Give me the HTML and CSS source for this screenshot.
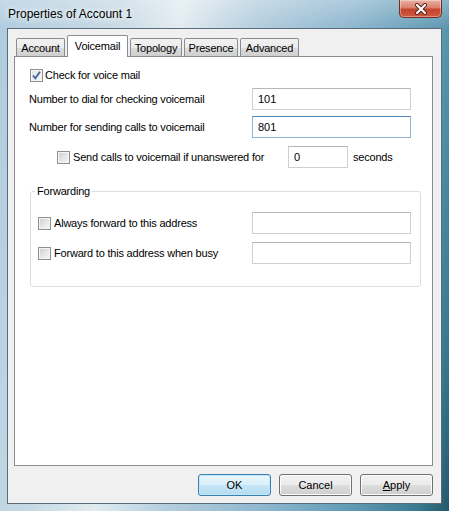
FILE: index.html
```html
<!DOCTYPE html>
<html lang="en">
<head>
<meta charset="UTF-8">
<title>Properties of Account 1</title>
<link rel="stylesheet" href="styles.css">
</head>
<body>

<div class="window">
  <div class="titlebar">
    <span class="title">Properties of Account 1</span>
    <div class="close">
      <svg width="16" height="12" viewBox="0 0 16 12">
        <path d="M4 2 L12 10 M12 2 L4 10" stroke="#5a2118" stroke-width="4" stroke-linecap="round"/>
        <path d="M4 2 L12 10 M12 2 L4 10" stroke="#fff" stroke-width="2.2" stroke-linecap="round"/>
      </svg>
    </div>
  </div>

  <div class="client">
    <div class="tabs">
      <div class="tab tab-account">Account</div>
      <div class="tab tab-active tab-voicemail">Voicemail</div>
      <div class="tab tab-topology">Topology</div>
      <div class="tab tab-presence">Presence</div>
      <div class="tab tab-advanced">Advanced</div>
    </div>

    <div class="panel">
      <div class="row row-check">
        <label class="check">
          <span class="box checked">
            <svg width="11" height="11" viewBox="0 0 11 11"><path d="M2 5.5 L4.3 8.3 L9 1.8" fill="none" stroke="#4b5f94" stroke-width="1.8"/></svg>
          </span>
          Check for voice mail
        </label>
      </div>
      <div class="row row-dial">
        <span class="label">Number to dial for checking voicemail</span>
        <input class="field field-wide" type="text" value="101">
      </div>
      <div class="row row-send">
        <span class="label">Number for sending calls to voicemail</span>
        <input class="field field-wide focused" type="text" value="801">
      </div>
      <div class="row row-timeout">
        <label class="check check-timeout"><span class="box"></span>Send calls to voicemail if unanswered for</label>
        <input class="field field-short" type="text" value="0">
        <span class="unit">seconds</span>
      </div>

      <fieldset class="group">
        <legend>Forwarding</legend>
        <div class="row row-always">
          <label class="check"><span class="box"></span>Always forward to this address</label>
          <input class="field field-wide" type="text" value="">
        </div>
        <div class="row row-busy">
          <label class="check"><span class="box"></span>Forward to this address when busy</label>
          <input class="field field-wide" type="text" value="">
        </div>
      </fieldset>
    </div>

    <div class="buttons">
      <button class="btn btn-default">OK</button>
      <button class="btn">Cancel</button>
      <button class="btn"><u>A</u>pply</button>
    </div>
  </div>
</div>

</body>
</html>
```

FILE: styles.css
```css
body {
  margin: 0;
  font-family: "Liberation Sans", Arial, sans-serif;
  font-size: 11px;
  letter-spacing: -0.2px;
  color: #000;
}

.window {
  width: 449px;
  height: 511px;
  box-sizing: border-box;
  padding: 0 7px 7px 7px;
  display: flex;
  flex-direction: column;
  background:
    linear-gradient(180deg, rgba(255,255,255,0.28), rgba(255,255,255,0) 30px),
    linear-gradient(100deg, #aecbdf 0%, #c6d9e4 22%, #e1ebf0 34%, #b3cddd 48%, #8db6cf 66%, #5f9ab3 82%, #3a7a90 94%, #24596b 100%);
}

.titlebar {
  height: 28px;
  flex-shrink: 0;
  display: flex;
  justify-content: space-between;
  align-items: flex-start;
}

.title {
  font-size: 12px;
  letter-spacing: 0;
  line-height: 28px;
  padding-left: 1px;
  text-shadow: 0 0 6px #fff, 0 0 10px rgba(255,255,255,0.8);
}

.close {
  width: 43px;
  height: 18px;
  box-sizing: border-box;
  border: 1px solid #7a2c22;
  border-top: none;
  border-radius: 0 0 5px 5px;
  background: linear-gradient(180deg, #eab2a4 0%, #d9806d 45%, #c2442f 55%, #cf5a3e 100%);
  box-shadow: inset 0 0 0 1px rgba(255,255,255,0.35);
  display: flex;
  align-items: center;
  justify-content: center;
}

.client {
  flex: 1;
  background: #f0f0f0;
  border: 1px solid #5d6b77;
  padding: 6px 0 0 6px;
  display: flex;
  flex-direction: column;
}

.tabs {
  display: flex;
  align-items: flex-end;
  height: 21px;
  padding-left: 2px;
}

.tab {
  height: 18px;
  box-sizing: border-box;
  border: 1px solid #898c95;
  border-bottom: none;
  border-radius: 2px 2px 0 0;
  background: linear-gradient(180deg, #f2f2f2 0%, #ebebeb 50%, #dddddd 51%, #cfcfcf 100%);
  display: flex;
  align-items: center;
  justify-content: center;
  margin-right: 2px;
}

.tab-account { width: 49px; margin-right: 2px; }
.tab-voicemail { width: 61px; }
.tab-topology { width: 52px; }
.tab-presence { width: 54px; margin-right: 2px; }
.tab-advanced { width: 59px; }

.tab-active {
  height: 22px;
  margin-bottom: -1px;
  background: #fff;
  position: relative;
  z-index: 1;
  padding-bottom: 2px;
}

.panel {
  width: 419px;
  height: 410px;
  box-sizing: border-box;
  border: 1px solid #898c95;
  background: #fff;
  padding: 7px 11px 0 14px;
  display: flex;
  flex-direction: column;
}

.row {
  height: 22px;
  display: flex;
  align-items: center;
  padding-right: 10px;
}

.row-dial { margin-top: 2px; }
.row-send { margin-top: 6px; }
.row-timeout { margin-top: 8px; padding-left: 28px; }

.row-check .check { margin-left: 1px; }

.check {
  display: flex;
  align-items: center;
  gap: 2px;
}

.check-timeout { width: 231px; gap: 3px; }

.box {
  width: 13px;
  height: 13px;
  box-sizing: border-box;
  border: 1px solid #8e8f8f;
  background: linear-gradient(135deg, #c9ccd1 0%, #e4e5e7 50%, #f7f7f7 100%);
  box-shadow: inset 0 0 0 1px #f4f4f4;
  display: flex;
  align-items: center;
  justify-content: center;
}

.box.checked {
  background: linear-gradient(135deg, #dfe4ea 0%, #f5f6f8 100%);
}

.field {
  height: 22px;
  box-sizing: border-box;
  border: 1px solid #cdd0d4;
  border-top-color: #b4b7bc;
  padding: 0 5px;
  font-family: "Liberation Sans", Arial, sans-serif;
  font-size: 11px;
  color: #000;
  background: #fff;
  outline: none;
}

.field-wide { width: 159px; margin-left: auto; }
.field-short { width: 60px; }

.field.focused {
  border-color: #8fb4d4;
  border-top-color: #4f87b6;
}

.unit { margin-left: 5px; }

.group {
  margin: 16px 0 0 1px;
  padding: 0 9px 22px 0;
  border: 1px solid #d5dfe5;
  border-radius: 3px;
  min-width: 0;
}

.group legend {
  margin-left: 4px;
  padding: 0 2px;
  line-height: 14px;
}

.group .row { padding: 0 0 0 7px; }
.group .check { gap: 3px; }
.row-always { margin-top: 14px; }
.row-busy { margin-top: 8px; }

.buttons {
  display: flex;
  justify-content: flex-end;
  gap: 8px;
  width: 419px;
  margin-top: 8px;
}

.btn {
  width: 73px;
  height: 22px;
  border: 1px solid #707070;
  border-radius: 3px;
  background: linear-gradient(180deg, #f2f2f2 0%, #ebebeb 50%, #dddddd 51%, #cfcfcf 100%);
  box-shadow: inset 0 0 0 1px #fcfcfc;
  font-family: "Liberation Sans", Arial, sans-serif;
  font-size: 11px;
  color: #000;
  padding: 0;
}

.btn-default {
  border-color: #3c7fb1;
  background: linear-gradient(180deg, #eaf6fd 0%, #d9f0fc 50%, #c6e6f7 51%, #b4dcf1 100%);
  box-shadow: inset 0 0 0 1px #c3e7fa;
}
```
